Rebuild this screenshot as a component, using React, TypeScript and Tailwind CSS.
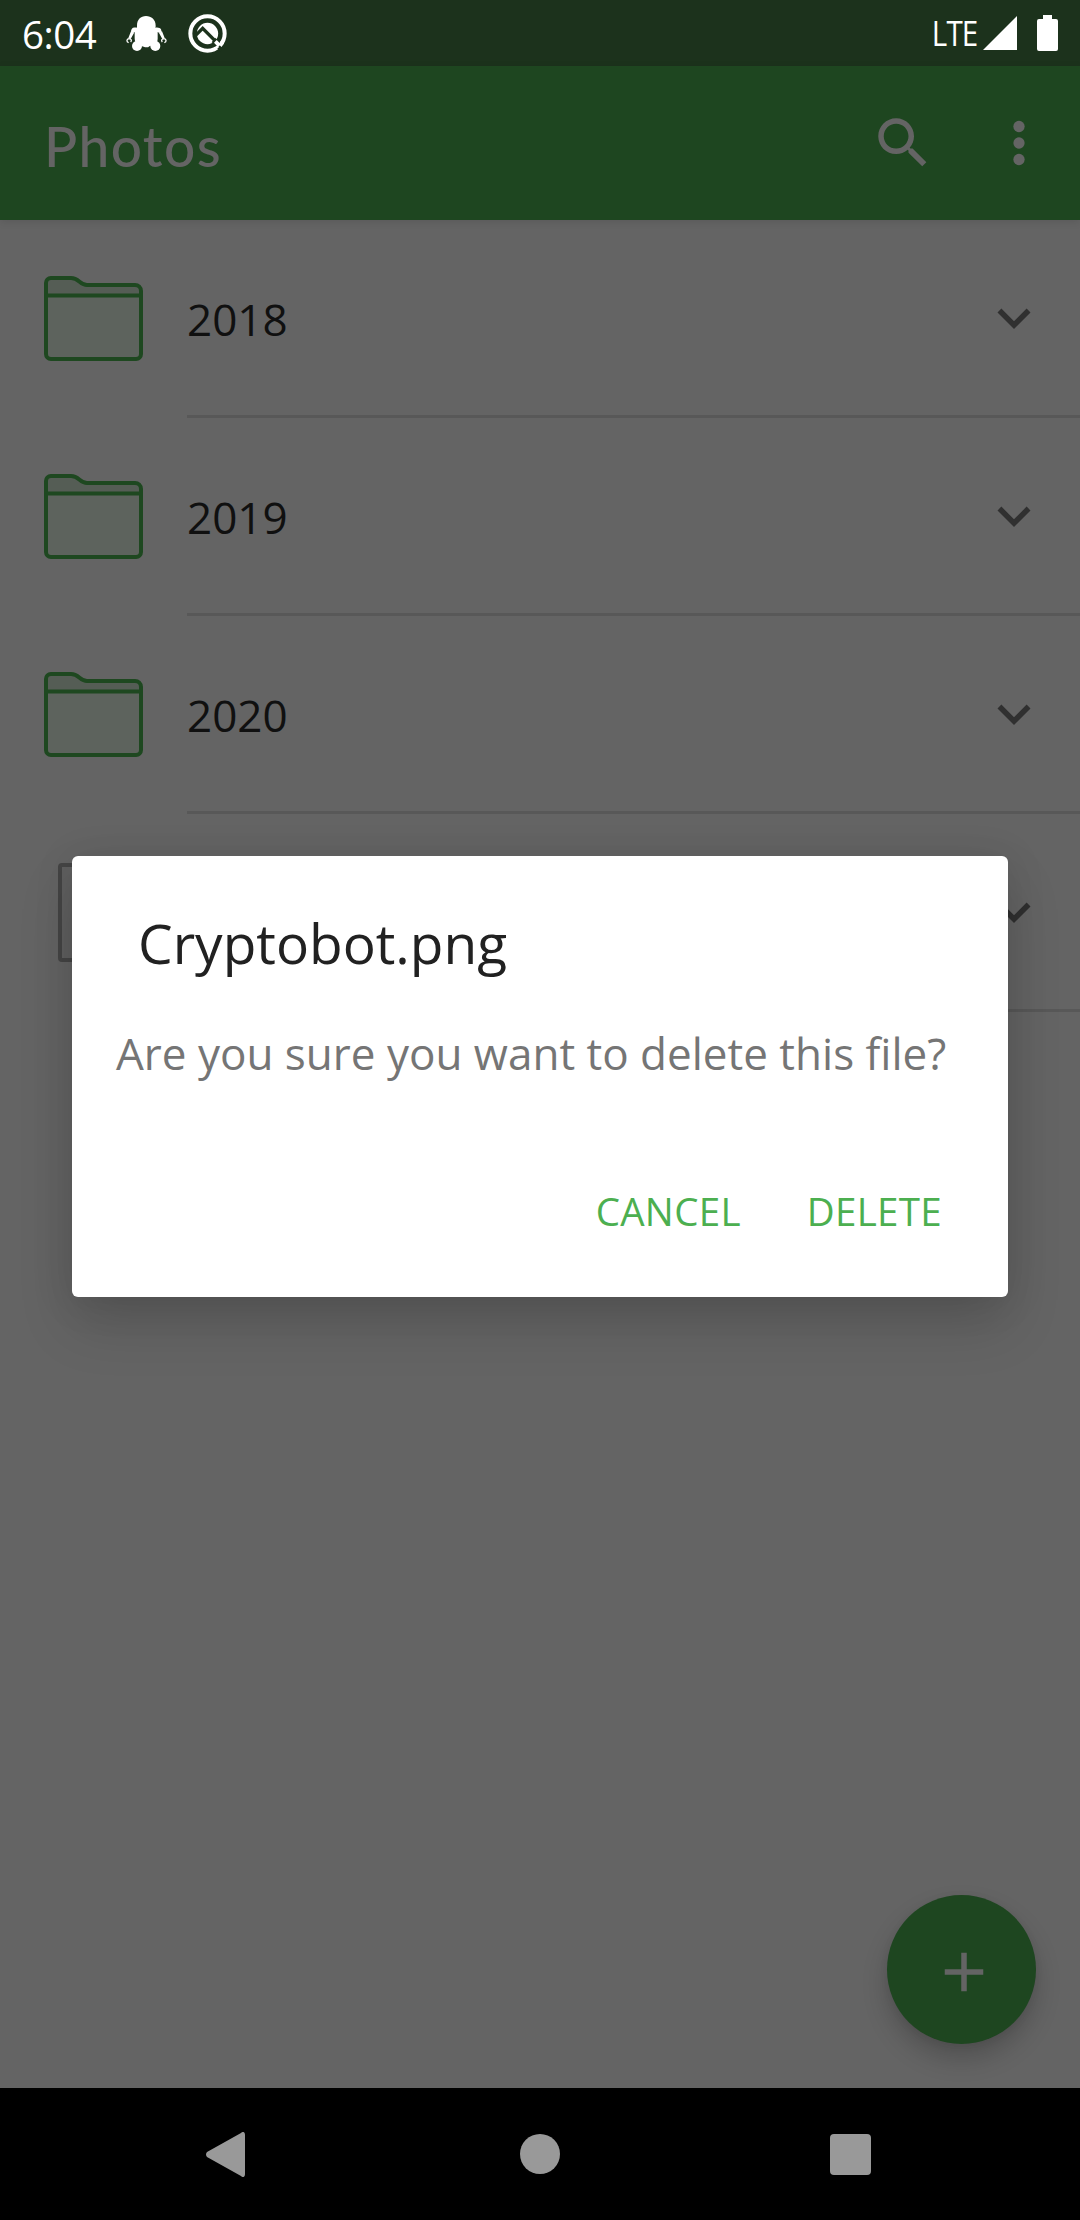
import React from "react";

function RobotIcon() {
  return (
    <svg className="h-[35px] w-[41px]" viewBox="0 0 123 105" fill="white">
      <path d="M33 29C33 11 44 0 60 0s29 11 29 29c0 2 0 4-1 6 6-2 15 0 17 5l2 8-7 3-5-3v20c0 8-3 13-8 17L70 91c-2 3-5 3-7 3-5 0-7-1-10-2L34 86c-5-5-8-11-8-19V48l-5 4-6-5c0-5 2-9 6-12 4 0 9-1 12 0Z" />
      <circle cx="33" cy="90" r="15" />
      <circle cx="88" cy="90" r="15" />
      <path d="m15 46 9 5-10 18-7-3ZM108 46l-9 5 10 18 7-3Z" />
      <path d="M8 80c-7-2-7-11 1-12 7 0 9 6 5 10M115 80c7-2 7-11-1-12-7 0-9 6-5 10" fill="none" stroke="white" strokeWidth="4" />
    </svg>
  );
}

function QIcon() {
  return (
    <svg className="h-[39px] w-[39px]" viewBox="0 0 117 117" fill="none">
      <circle cx="58.500" cy="58.500" r="51.500" stroke="white" strokeWidth="12" />
      <circle cx="58.500" cy="58.500" r="32" fill="white" />
      <path d="M20 67 44 43l60 60" stroke="#1c321c" strokeWidth="10" />
      <path d="M71 85l14 10 12-10-16-14Z" fill="#1c321c" />
      <path d="M78 86l12 13 9-8-13-13Z" fill="white" />
      <path d="M88 104l9 9 14-14-9-9Z" fill="#1c321c" />
      <path d="M103.500 83.700A52 52 0 0 1 96 95" stroke="white" strokeWidth="12" />
    </svg>
  );
}

function FolderIcon() {
  return (
    <svg className="h-[85px] w-[99px] shrink-0" viewBox="0 0 99 85">
      <path d="M2 20V7a5 5 0 0 1 5-5h20c8 0 9 7 16 7h48a6 6 0 0 1 6 6v5Z" fill="#555d55" />
      <path d="M2 20h95v58a5 5 0 0 1-5 5H7a5 5 0 0 1-5-5Z" fill="#5d635d" />
      <path
        d="M7 2h20c8 0 9 7 16 7h48a6 6 0 0 1 6 6v63a5 5 0 0 1-5 5H7a5 5 0 0 1-5-5V7a5 5 0 0 1 5-5ZM2 19.500h95"
        fill="none"
        stroke="#1e4820"
        strokeWidth="4"
      />
    </svg>
  );
}

function FileIcon() {
  return (
    <svg className="ml-[14px] h-[99px] w-[71px] shrink-0" viewBox="0 0 71 99">
      <rect x="2" y="2" width="67" height="95" rx="2" fill="#606060" stroke="#454545" strokeWidth="4" />
    </svg>
  );
}

function Chevron() {
  return (
    <svg className="ml-auto mr-[33px] h-[66px] w-[66px] shrink-0" viewBox="0 0 24 24" fill="#303030">
      <path d="M7.410 8.590 12 13.170l4.590-4.580L18 10l-6 6-6-6 1.410-1.410z" />
    </svg>
  );
}

function Row({ label }: { label: string }) {
  return (
    <div className="flex h-[198px] pl-[44px]">
      <div className="flex w-[143px] shrink-0 items-center pb-[1px]">
        {label ? <FolderIcon /> : <div className="pb-[1px]"><FileIcon /></div>}
      </div>
      <div className="flex flex-1 items-center border-b-3 border-[#585858] pt-[1px]">
        <span className="pt-[2px] text-[44px] leading-[60px] text-[#101010]">{label}</span>
        <Chevron />
      </div>
    </div>
  );
}

export default function App() {
  return (
    <div className="relative flex h-[2220px] w-[1080px] flex-col overflow-hidden bg-[#646464] font-['Open_Sans',sans-serif]">
      <header className="flex h-[66px] shrink-0 items-center bg-[#1c321c] pl-[22px] text-white">
        <span className="w-[104px] pt-[1px] text-[38.500px] leading-[52px] tracking-[-0.5px]">6:04</span>
        <RobotIcon />
        <div className="ml-[21px]"><QIcon /></div>
        <span className="ml-auto origin-right scale-x-[0.87] pb-[1px] text-[34px] leading-[44px] tracking-[-1px]">LTE</span>
        <svg className="ml-[6px] h-[34px] w-[34px]" viewBox="0 0 34 34"><path d="M34 0v34H0Z" fill="white" /></svg>
        <svg className="mr-[22px] ml-[20px] h-[36px] w-[21px]" viewBox="0 0 21 36">
          <path d="M6 0h9v4h4a2 2 0 0 1 2 2v28a2 2 0 0 1-2 2H2a2 2 0 0 1-2-2V6a2 2 0 0 1 2-2h4Z" fill="white" />
        </svg>
      </header>

      <div className="z-10 flex h-[154px] shrink-0 items-center bg-[#1e4620] pr-[28px] pl-[44px] shadow-[0_2px_8px_rgba(0,0,0,0.1)]">
        <h1 className="pt-[6px] font-['Lato',sans-serif] text-[55px] leading-[66px] font-medium tracking-[1.400px] text-[#646464]">Photos</h1>
        <svg className="ml-auto h-[66px] w-[66px]" viewBox="0 0 24 24" fill="#646464">
          <path d="M15.500 14h-.79l-.28-.27C15.410 12.590 16 11.110 16 9.500 16 5.910 13.090 3 9.500 3S3 5.910 3 9.500 5.910 16 9.500 16c1.610 0 3.090-.59 4.230-1.570l.27.28v.79l5 4.990L20.490 19l-4.990-5zm-6 0C7.010 14 5 11.990 5 9.500S7.010 5 9.500 5 14 7.010 14 9.500 11.990 14 9.500 14z" />
        </svg>
        <svg className="ml-[50px] h-[66px] w-[66px]" viewBox="0 0 24 24" fill="#646464">
          <circle cx="12" cy="6" r="2.050" />
          <circle cx="12" cy="12" r="2.050" />
          <circle cx="12" cy="18" r="2.050" />
        </svg>
      </div>

      <main className="flex-1">
        <Row label="2018" />
        <Row label="2019" />
        <Row label="2020" />
        <Row label="" />
      </main>

      <button className="absolute top-[1895px] left-[887px] flex h-[149px] w-[149px] items-center justify-center rounded-full bg-[#1e4620] pt-[5px] pl-[5px] shadow-[0_14px_26px_rgba(0,0,0,0.2),0_2px_8px_rgba(0,0,0,0.06)]">
        <svg className="h-[66px] w-[66px]" viewBox="0 0 24 24" fill="#646464"><path d="M19 13h-6v6h-2v-6H5v-2h6V5h2v6h6z" /></svg>
      </button>

      <section className="absolute top-[856px] left-[72px] z-20 flex h-[441px] w-[936px] flex-col rounded-[6px] bg-white shadow-[0_28px_56px_rgba(0,0,0,0.14),0_4px_40px_rgba(0,0,0,0.1)]">
        <h2 className="mt-[49px] ml-[66px] text-[55px] leading-[75px] text-[#212121]">Cryptobot.png</h2>
        <p className="mt-[43px] ml-[44px] text-[44px] leading-[60px] whitespace-nowrap text-[#757575]">Are you sure you want to delete this file?</p>
        <div className="mt-[102px] mr-[66px] flex justify-end gap-[66px] text-[38.500px] leading-[52px] tracking-[0.300px] text-[#4caf50]">
          <button>CANCEL</button>
          <button>DELETE</button>
        </div>
      </section>

      <nav className="flex h-[132px] shrink-0 items-center bg-black pl-[206px]">
        <svg className="h-[45px] w-[39px]" viewBox="0 0 39 45"><path d="M35 1c2-2 4-1 4 2v39c0 3-2 4-4 2L1 25q-2-2.500 0-5Z" fill="#999" /></svg>
        <div className="ml-[275px] h-[40px] w-[40px] rounded-full bg-[#999]" />
        <div className="ml-[270px] h-[41px] w-[41px] rounded-[4px] bg-[#999]" />
      </nav>
    </div>
  );
}
